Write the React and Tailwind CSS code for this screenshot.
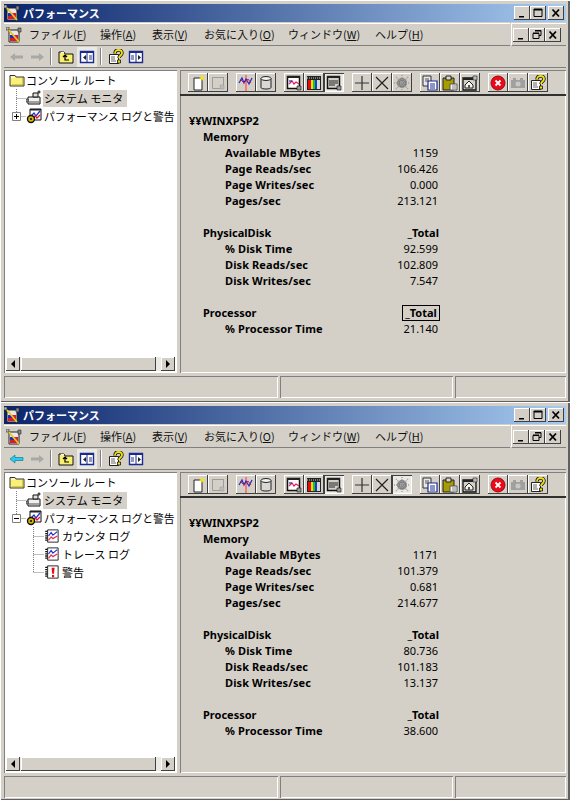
const raised = "shadow-[inset_-1px_-1px_#404040,inset_1px_1px_#ffffff]";
const sunken = "shadow-[inset_1px_1px_#808080,inset_-1px_-1px_#ffffff]";

const Svg = ({ size = 16, children }) => (
	<svg width={size} height={size} viewBox="0 0 16 16" className="shrink-0">
		{children}
	</svg>
);

// small app icon with the red flag and yellow slash, used in title and menu
const AppIcon = () => (
	<Svg>
		<path d="M3 3h10v12H3z" fill="#e8e8e8" stroke="#222" />
		<path d="M4 8h8v6H4z" fill="#e01828" />
		<path d="M4 8h4v3H4z" fill="#2030b0" />
		<path d="M2 2l11 13" stroke="#e8c820" strokeWidth="1.800" />
		<path d="M12 1h3v4h-3z" fill="#888" stroke="#222" strokeWidth=".6" />
		<path d="M0 0h3v3H0z" fill="#bbb" stroke="#222" strokeWidth=".6" />
	</Svg>
);

const ArrowLeft = ({ active }) => (
	<Svg>
		<path
			d="M1 8l5-4v2.500h8v3H6V12z"
			fill={active ? "#20d0f0" : "#a8a8a4"}
			stroke={active ? "#186878" : "none"}
			strokeWidth=".6"
		/>
	</Svg>
);

const ArrowRight = () => (
	<Svg>
		<path d="M15 8l-5-4v2.500H2v3h8V12z" fill="#a8a8a4" />
	</Svg>
);

const FolderUp = () => (
	<Svg>
		<path d="M1 3h5l1 2h8v9H1z" fill="#f8f070" stroke="#111" />
		<path d="M3 3.500h3" stroke="#fff" />
		<path d="M5 8l2-2 2 2M7 6v5h4" fill="none" stroke="#000" strokeWidth="1.200" />
	</Svg>
);

const PaneIcon = ({ flip }) => (
	<Svg>
		<path d="M1.500 2.500h13v11h-13z" fill="#fff" stroke="#1a2a90" strokeWidth="1.400" />
		<path d="M1 2h14v2H1z" fill="#1a2a90" />
		<path d="M8 3v10" stroke="#1a2a90" />
		{flip ? (
			<path d="M10 6l3 2.500-3 2.500z" fill="#222" />
		) : (
			<path d="M7 6L4 8.500 7 11z" fill="#222" />
		)}
		<path d={flip ? "M3 6h3v5H3z" : "M10 6h3v5h-3z"} fill="#9098c8" />
	</Svg>
);

const HelpDoc = () => (
	<Svg>
		<path d="M1.500 5.500h9v9h-9z" fill="#fff" stroke="#222" />
		<path d="M3 8h4M3 10h4M3 12h5" stroke="#666" />
		<path
			d="M7 4.500C7 2 8.500 1 10.500 1S14 2 14 4c0 2.500-3 2.500-3 5"
			fill="none"
			stroke="#111"
			strokeWidth="3.400"
		/>
		<path
			d="M7 4.500C7 2 8.500 1 10.500 1S14 2 14 4c0 2.500-3 2.500-3 5"
			fill="none"
			stroke="#f0e010"
			strokeWidth="1.800"
		/>
		<path d="M9.500 11h3v3h-3z" fill="#f0e010" stroke="#111" strokeWidth=".8" />
	</Svg>
);

const Folder = () => (
	<Svg>
		<path d="M1 3.500h5l1 1.500h8v9H1z" fill="#f8f078" stroke="#333" />
		<path d="M2 5h4" stroke="#fff" />
		<path d="M14 6v7H3" fill="none" stroke="#b0a030" />
	</Svg>
);

const Monitor = () => (
	<Svg>
		<path d="M2 7h12v7H2z" fill="#f0f0ec" stroke="#111" />
		<path d="M3 11h10v2H3z" fill="#a0a0a0" />
		<path d="M7 3h5v4H7z" fill="#e0e0dc" stroke="#111" />
		<path d="M12 1h2v2h-2z" fill="#808080" stroke="#111" strokeWidth=".6" />
		<path d="M0 9h2v3H0z" fill="#b0b0b0" stroke="#111" strokeWidth=".6" />
	</Svg>
);

const PerfLogs = () => (
	<Svg>
		<path d="M4 1h11v11H4z" fill="#fff" stroke="#111" />
		<path d="M4 1h11v1.500H4z" fill="#222" />
		<path d="M5 8l3-3 2 3 4-5" fill="none" stroke="#2030d0" strokeWidth="1.300" />
		<path d="M7 10l2-2 2 2 3-3" fill="none" stroke="#e01830" strokeWidth="1.300" />
		<circle cx="5" cy="11" r="3.500" fill="#d8b800" stroke="#111" strokeWidth="1.400" />
		<circle cx="5" cy="11" r="1.100" fill="#111" />
	</Svg>
);

const LogFile = ({ alert }) => (
	<Svg size={14}>
		<path d="M3 1h12v14H3z" fill="#fff" stroke="#111" />
		<path d="M1.500 2v12" stroke="#111" strokeWidth="2.500" strokeDasharray="1.500 1" />
		{alert ? (
			<path d="M7.500 3h3.500l-.7 7H8.200zM8 11.500h2.500V14H8z" fill="#ee0818" />
		) : (
			<>
				<path d="M4 8l3-4 2 3 5-4" fill="none" stroke="#2030d0" strokeWidth="1.400" />
				<path d="M4 13l3-4 2 2 5-3" fill="none" stroke="#e83050" strokeWidth="1.400" />
			</>
		)}
	</Svg>
);

const ToolIcon = ({ name }) => {
	switch (name) {
		case "new":
			return (
				<Svg>
					<path d="M4 3h8v12H4z" fill="#fff" stroke="#222" />
					<path d="M12 0l1 2 2 1-2 1-1 2-1-2-2-1 2-1z" fill="#f8e800" />
				</Svg>
			);
		case "clear":
			return (
				<Svg>
					<path d="M2.500 2.500h11v11h-11z" fill="#d4d0c8" stroke="#9c9c98" />
					<path d="M2 2h12v1H2z" fill="#9c9c98" />
					<path d="M10 10h4v4h-4z" fill="#bbb" stroke="#999" strokeWidth=".5" />
				</Svg>
			);
		case "spark":
			return (
				<Svg>
					<path d="M8 0v16" stroke="#f08080" strokeWidth="2" />
					<path d="M1 8l3-5 2 5 2-4 3 5 3-6" fill="none" stroke="#2030d0" strokeWidth="1.300" />
					<path d="M2 4l4 4 4-4 3 4" fill="none" stroke="#e02030" />
				</Svg>
			);
		case "db":
			return (
				<Svg>
					<path d="M3 3.500v9c0 2 10 2 10 0v-9" fill="#d8d8d4" stroke="#222" />
					<ellipse cx="8" cy="3.500" rx="5" ry="2" fill="#f4f4f0" stroke="#222" />
				</Svg>
			);
		case "graph":
			return (
				<Svg>
					<path d="M1.500 1.500h12v12h-12z" fill="#fff" stroke="#111" strokeWidth="1.500" />
					<path d="M1 1h13v2H1z" fill="#222" />
					<path d="M3 9l3-3 2 3 2-2 3 2" fill="none" stroke="#e81860" strokeWidth="1.200" />
					<path d="M3 6h3" stroke="#2030c0" strokeWidth="1.200" />
					<path d="M11 11h4v4h-4z" fill="#999" stroke="#111" strokeWidth=".6" />
				</Svg>
			);
		case "bars":
			return (
				<Svg>
					<path d="M1 1h14v14H1z" fill="#222" />
					<path d="M1 3h14" stroke="#d0d0d0" strokeDasharray="1 1" />
					<path d="M2 5h3v9H2z" fill="#e80810" />
					<path d="M5 5h2v9H5z" fill="#f8d800" />
					<path d="M7 5h2v9H7z" fill="#10c830" />
					<path d="M9 5h2v9H9z" fill="#1838e0" />
					<path d="M11 5h3v9h-3z" fill="#d8d8d8" />
				</Svg>
			);
		case "report":
			return (
				<Svg>
					<path d="M1.500 1.500h12v12h-12z" fill="#d4d0c8" stroke="#111" strokeWidth="1.500" />
					<path d="M1 1h13v2H1z" fill="#222" />
					<path d="M3 6h9M3 8h9M3 10h6" stroke="#222" />
					<path d="M11 11h4v4h-4z" fill="#999" stroke="#111" strokeWidth=".6" />
				</Svg>
			);
		case "plus":
			return (
				<Svg>
					<path d="M8 1v14M1 8h14" stroke="#333" strokeWidth="1.200" />
				</Svg>
			);
		case "times":
			return (
				<Svg>
					<path d="M2 2l12 12M14 2L2 14" stroke="#222" strokeWidth="1.200" />
				</Svg>
			);
		case "burst":
			return (
				<Svg>
					<circle cx="8" cy="8" r="5" fill="#808080" />
					<path
						d="M8 0v16M0 8h16M2 2l12 12M14 2L2 14"
						stroke="#a0a0a0"
						strokeWidth="1.400"
						strokeDasharray="1 1"
					/>
				</Svg>
			);
		case "copy":
			return (
				<Svg>
					<path d="M1 1h8v10H1z" fill="#e8e8e4" stroke="#333" />
					<path d="M3 4h4M3 6h4" stroke="#555" />
					<path d="M6 6h9v9H6z" fill="#fff" stroke="#1a2a90" strokeWidth="1.200" />
					<path d="M8 9h5M8 11h5M8 13h5" stroke="#1a2a90" />
				</Svg>
			);
		case "paste":
			return (
				<Svg>
					<path d="M1 3h11v12H1z" fill="#a89c00" stroke="#222" />
					<path d="M4 1h5v4H4z" fill="#d8d8d0" stroke="#222" />
					<path d="M8 9h7v6H8z" fill="#f4f4f0" stroke="#555" />
					<path d="M10 11h4M10 13h4" stroke="#888" />
				</Svg>
			);
		case "props":
			return (
				<Svg>
					<path d="M1 3h13v12H1z" fill="#d4d0c8" stroke="#111" strokeWidth="1.300" />
					<path d="M1 3h13v2H1z" fill="#222" />
					<path d="M3 10l4-4 4 4v3H3z" fill="#f4f4f0" stroke="#222" />
					<path d="M6 10h2v3H6z" fill="#555" />
					<path d="M11 1h4v4h-4z" fill="#bbb" stroke="#222" strokeWidth=".6" />
				</Svg>
			);
		case "stop":
			return (
				<Svg>
					<circle cx="8" cy="8" r="7" fill="#ee0818" stroke="#901018" />
					<path d="M5.500 5.500l5 5M10.500 5.500l-5 5" stroke="#fff" strokeWidth="1.800" />
				</Svg>
			);
		case "camera":
			return (
				<Svg>
					<path d="M1 5h14v8H1z" fill="#a0a0a0" />
					<path d="M3 3h3v2H3zM10 3h3v2h-3z" fill="#a0a0a0" />
					<circle cx="8" cy="9" r="2.500" fill="#c8c8c4" />
				</Svg>
			);
		default:
			return <HelpDoc />;
	}
};

const ToolButton = ({ name, pressed }) => (
	<button
		className={`flex h-[19px] w-[20px] items-center justify-center ${pressed ? "bg-[#ebe9e4] shadow-[inset_1px_1px_#404040,inset_-1px_-1px_#ffffff]" : raised}`}>
		<ToolIcon name={name} />
	</button>
);

const WinButton = ({ type }) => (
	<button className={`flex h-[14px] w-[16px] items-center justify-center bg-[#d4d0c8] ${raised}`}>
		<svg width="10" height="10" viewBox="0 0 10 10">
			{type === "min" && <path d="M2 8h5v1.500H2z" fill="#000" />}
			{type === "max" && <path d="M1 1.500h8v7H1zM1 1h8v1H1z" fill="none" stroke="#000" />}
			{type === "restore" && (
				<path d="M3 .5h6v5H7M1 3.500h6v5H1zM1 3h6M3 1h6" fill="none" stroke="#000" />
			)}
			{type === "close" && <path d="M1.500 1.500l6.500 7M8 1.500l-6.500 7" stroke="#000" strokeWidth="1.800" />}
		</svg>
	</button>
);

const ScrollArrow = ({ right }) => (
	<button className={`flex h-[14px] w-[14px] shrink-0 items-center justify-center bg-[#d4d0c8] ${raised}`}>
		<svg width="6" height="8" viewBox="0 0 6 8">
			<path d={right ? "M1 0l4 4-4 4z" : "M5 0L1 4l4 4z"} fill="#000" />
		</svg>
	</button>
);

const Connector = ({ width, vertical, to, last, plus, minus }) => (
	<svg width={width} height="18" viewBox={`0 0 ${width} 18`} className="shrink-0">
		{vertical !== undefined && (
			<path
				d={`M${vertical + 0.5} 0V${last ? 9 : 18}M${vertical + 0.5} 9.500H${to}`}
				stroke="#808080"
				strokeDasharray="1 1"
				fill="none"
			/>
		)}
		{(plus || minus) && (
			<>
				<path d="M10.500 0v5M14.500 9.500H20" stroke="#808080" strokeDasharray="1 1" fill="none" />
				<path d="M6.500 5.500h8v8h-8z" fill="#fff" stroke="#808080" />
				<path d={plus ? "M8 9.500h5M10.500 7v5" : "M8 9.500h5"} stroke="#000" />
			</>
		)}
	</svg>
);

const Tree = ({ expanded }) => (
	<div className="-mt-[1px] flex-1 text-[11px] text-black">
		<div className="flex h-[18px] items-center pl-[3px]">
			<Folder />
			<span className="ml-[1px] whitespace-nowrap">コンソール ルート</span>
		</div>
		<div className="flex h-[18px] items-center">
			<Connector width={20} vertical={10} to={20} />
			<Monitor />
			<span className="ml-[1px] whitespace-nowrap bg-[#d4d0c8] pl-[1px] pr-[4px] leading-[17px]">
				システム モニタ
			</span>
		</div>
		<div className="flex h-[18px] items-center">
			<Connector width={20} plus={!expanded} minus={expanded} />
			<PerfLogs />
			<span className="ml-[2px] whitespace-nowrap text-[10.800px] tracking-[-0.100px]">
				パフォーマンス ログと警告
			</span>
		</div>
		{expanded && (
			<>
				<div className="flex h-[18px] items-center">
					<Connector width={39} vertical={27} to={38} />
					<LogFile />
					<span className="ml-[3px]">カウンタ ログ</span>
				</div>
				<div className="flex h-[18px] items-center">
					<Connector width={39} vertical={27} to={38} />
					<LogFile />
					<span className="ml-[3px]">トレース ログ</span>
				</div>
				<div className="flex h-[18px] items-center">
					<Connector width={39} vertical={27} to={38} last />
					<LogFile alert />
					<span className="ml-[3px]">警告</span>
				</div>
			</>
		)}
	</div>
);

const LeftPane = ({ expanded }) => (
	<div className={`flex w-[173px] flex-col bg-white p-[2px] ${sunken}`}>
		<Tree expanded={expanded} />
		<div className="flex h-[14px] bg-[#ebe9e4]">
			<ScrollArrow />
			<div className={`ml-[1px] h-[14px] w-[135px] bg-[#d4d0c8] ${raised}`} />
			<div className="flex-1" />
			<ScrollArrow right />
		</div>
	</div>
);

const toolGroups = [
	["new", "clear"],
	["spark", "db"],
	["graph", "bars", "report"],
	["plus", "times", "burst"],
	["copy", "paste", "props"],
	["stop", "camera", "help"],
];

const Counter = ({ label, value }) => (
	<div className="flex h-[16px] items-center justify-between pl-[36px] pr-[1px]">
		<span className="font-bold tracking-[0.100px]">{label}</span>
		<span>{value}</span>
	</div>
);

const Instance = ({ label, focused }) => (
	<div className="flex h-[16px] items-center justify-between pl-[14px]">
		<span className="font-bold">{label}</span>
		<span
			className={`font-bold ${focused ? "-mr-[1px] flex h-[16px] w-[38px] items-center justify-center border border-black" : ""}`}>
			_Total
		</span>
	</div>
);

const RightPane = ({ pressedBurst, data, focused }) => (
	<div className={`ml-[3px] flex flex-1 flex-col overflow-hidden ${sunken}`}>
		<div className="flex h-[26px] gap-[8px] border-b-2 border-b-[#303030] pl-[8px] pt-[3px]">
			{toolGroups.map((group) => (
				<div key={group[0]} className="flex">
					{group.map((name) => (
						<ToolButton
							key={name}
							name={name}
							pressed={name === "report" || (name === "burst" && pressedBurst)}
						/>
					))}
				</div>
			))}
		</div>
		<div className="w-[259px] pl-[9px] pt-[17px] font-['Noto_Sans','Liberation_Sans',sans-serif] text-[11px] text-black">
			<div className="flex h-[16px] items-center font-bold">¥¥WINXPSP2</div>
			<div className="flex h-[16px] items-center pl-[14px] font-bold">Memory</div>
			<Counter label="Available MBytes" value={data.mbytes} />
			<Counter label="Page Reads/sec" value={data.reads} />
			<Counter label="Page Writes/sec" value={data.writes} />
			<Counter label="Pages/sec" value={data.pages} />
			<div className="h-[16px]" />
			<Instance label="PhysicalDisk" />
			<Counter label="% Disk Time" value={data.diskTime} />
			<Counter label="Disk Reads/sec" value={data.diskReads} />
			<Counter label="Disk Writes/sec" value={data.diskWrites} />
			<div className="h-[16px]" />
			<Instance label="Processor" focused={focused} />
			<Counter label="% Processor Time" value={data.cpu} />
		</div>
	</div>
);

const menuItems = [
	["ファイル", "F", "w-[71px]"],
	["操作", "A", "w-[52px]"],
	["表示", "V", "w-[52px]"],
	["お気に入り", "O", "w-[84px]"],
	["ウィンドウ", "W", "w-[87px]"],
	["ヘルプ", "H", "w-[70px]"],
];

const PerfWindow = ({ className, expanded, activeBack, pressedBurst, focused, data }) => (
	<div
		className={`flex flex-col bg-[#d4d0c8] px-[4px] pt-[4px] shadow-[inset_1px_1px_#ffffff,inset_-2px_-1px_#606060] ${className}`}>
		<div className="flex h-[18px] items-center justify-between bg-[linear-gradient(90deg,#0a246a,#a6caf0)] pr-[2px]">
			<div className="flex items-center gap-[3px]">
				<AppIcon />
				<span className="text-[11px] font-bold text-white">パフォーマンス</span>
			</div>
			<div className="flex items-center">
				<WinButton type="min" />
				<WinButton type="max" />
				<div className="w-[2px]" />
				<WinButton type="close" />
			</div>
		</div>
		<div className="mt-[1px] flex h-[23px]">
			<div className="flex flex-1 items-center border-y border-t-white border-b-[#808080] pl-[2px]">
				<AppIcon />
				<div className="ml-[7px] flex text-[11px] text-[#111]">
					{menuItems.map(([label, key, width]) => (
						<span key={key} className={width}>
							{label}(<span className="underline">{key}</span>)
						</span>
					))}
				</div>
			</div>
			<div className="ml-[1px] flex w-[55px] items-center border-y border-l border-white border-b-[#808080] pl-[1px]">
				<WinButton type="min" />
				<WinButton type="restore" />
				<WinButton type="close" />
			</div>
		</div>
		<div className="flex h-[22px] items-center border-b border-b-[#808080] pl-[5px]">
			<ArrowLeft active={activeBack} />
			<div className="ml-[4px]">
				<ArrowRight />
			</div>
			<div className="ml-[5px] h-[17px] w-[2px] border-l border-r border-l-[#808080] border-r-white" />
			<div className="ml-[6px]">
				<FolderUp />
			</div>
			<div className="ml-[3px] flex h-[20px] w-[20px] items-center justify-center bg-[#ebe9e4]">
				<PaneIcon />
			</div>
			<div className="ml-[3px] h-[17px] w-[2px] border-l border-r border-l-[#808080] border-r-white" />
			<div className="ml-[6px]">
				<HelpDoc />
			</div>
			<div className="ml-[4px]">
				<PaneIcon flip />
			</div>
		</div>
		<div className="mt-[2px] flex min-h-0 flex-1">
			<LeftPane expanded={expanded} />
			<RightPane pressedBurst={pressedBurst} data={data} focused={focused} />
		</div>
		<div className="mt-[3px] flex h-[22px] gap-[2px]">
			<div className={`w-[274px] ${sunken}`} />
			<div className={`w-[173px] ${sunken}`} />
			<div className={`flex-1 ${sunken}`} />
		</div>
	</div>
);

export default function App() {
	return (
		<div className="h-[800px] w-[570px] overflow-hidden font-['Noto_Sans_CJK_JP','Liberation_Sans',sans-serif]">
			<PerfWindow
				className="h-[402px] pb-[4px]"
				focused
				data={{
					mbytes: "1159",
					reads: "106.426",
					writes: "0.000",
					pages: "213.121",
					diskTime: "92.599",
					diskReads: "102.809",
					diskWrites: "7.547",
					cpu: "21.140",
				}}
			/>
			<PerfWindow
				className="h-[398px] pb-[2px]"
				expanded
				activeBack
				pressedBurst
				data={{
					mbytes: "1171",
					reads: "101.379",
					writes: "0.681",
					pages: "214.677",
					diskTime: "80.736",
					diskReads: "101.183",
					diskWrites: "13.137",
					cpu: "38.600",
				}}
			/>
		</div>
	);
}
